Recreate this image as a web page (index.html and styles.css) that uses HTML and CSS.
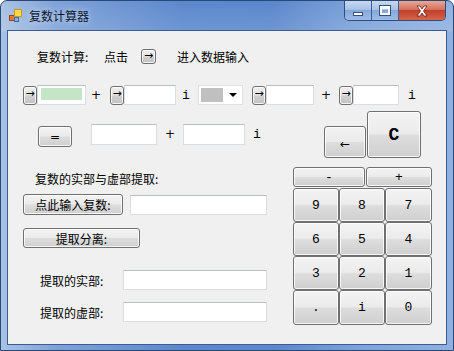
FILE: index.html
```html
<!DOCTYPE html>
<html>
<head>
<meta charset="utf-8">
<link rel="stylesheet" href="styles.css">
</head>
<body>
<div class="window">
  <div class="titlebar">
    <svg class="appicon" width="13" height="13" viewBox="0 0 13 13">
      <rect x="0.5" y="6.5" width="5" height="5" fill="#e8742e" stroke="#a34310"/>
      <rect x="5.5" y="0.5" width="7" height="7" fill="#ffd84a" stroke="#c79a12"/>
      <rect x="5.5" y="8.5" width="4" height="4" fill="#7fb0e8" stroke="#3a6aa8"/>
    </svg>
    <span class="title">复数计算器</span>
    <div class="caption">
      <div class="cbtn min"><span class="minbar"></span></div>
      <div class="cbtn max"><span class="maxbox"></span></div>
      <div class="cbtn close">
        <svg width="14" height="12" viewBox="0 0 14 12">
          <path d="M2 1 L5 1 L7 4 L9 1 L12 1 L8.5 6 L12 11 L9 11 L7 8 L5 11 L2 11 L5.5 6 Z" fill="#fff" stroke="#6b1a10" stroke-width="0.8"/>
        </svg>
      </div>
    </div>
  </div>
  <div class="client">
    <div class="r1">
      <span class="lbl-calc">复数计算:</span>
      <span class="lbl-click">点击</span>
      <span class="btn arrow a1">→</span>
      <span class="lbl-enter">进入数据输入</span>
    </div>
    <div class="r2">
      <span class="btn arrow a2">→</span>
      <span class="tb tb-green"><span class="green"></span></span>
      <span class="sym sym-p1">+</span>
      <span class="btn arrow a3">→</span>
      <span class="tb tb2"></span>
      <span class="sym mono sym-i1">i</span>
      <span class="combo"><span class="combo-sel"></span><span class="combo-arrow"></span></span>
      <span class="btn arrow a4">→</span>
      <span class="tb tb3"></span>
      <span class="sym sym-p2">+</span>
      <span class="btn arrow a5">→</span>
      <span class="tb tb4"></span>
      <span class="sym mono sym-i2">i</span>
    </div>
    <div class="lower">
      <div class="left">
        <div class="r3">
          <span class="btn eq">=</span>
          <span class="tb tb5"></span>
          <span class="sym sym-p3">+</span>
          <span class="tb tb6"></span>
          <span class="sym mono sym-i3">i</span>
        </div>
        <div class="lbl-extract">复数的实部与虚部提取:</div>
        <div class="r4">
          <span class="btn btn-input">点此输入复数:</span>
          <span class="tb tb7"></span>
        </div>
        <div class="r5">
          <span class="btn btn-split">提取分离:</span>
        </div>
        <div class="r6">
          <span class="lbl-part">提取的实部:</span>
          <span class="tb tb8"></span>
        </div>
        <div class="r7">
          <span class="lbl-part">提取的虚部:</span>
          <span class="tb tb8"></span>
        </div>
      </div>
      <div class="right">
        <div class="top-keys">
          <span class="btn back">←</span>
          <span class="btn clear">C</span>
        </div>
        <div class="pm">
          <span class="btn minus mono">-</span>
          <span class="btn plus mono">+</span>
        </div>
        <div class="pad">
          <span class="btn key">9</span>
          <span class="btn key">8</span>
          <span class="btn key">7</span>
          <span class="btn key">6</span>
          <span class="btn key">5</span>
          <span class="btn key">4</span>
          <span class="btn key">3</span>
          <span class="btn key">2</span>
          <span class="btn key">1</span>
          <span class="btn key">.</span>
          <span class="btn key">i</span>
          <span class="btn key">0</span>
        </div>
      </div>
    </div>
  </div>
</div>
</body>
</html>
```

FILE: styles.css
```css
* { box-sizing: border-box; }
html, body { margin: 0; padding: 0; background: #fff; }
body {
  font-family: "Noto Sans CJK SC", sans-serif;
  font-size: 12px;
  color: #000;
}
.window {
  width: 454px;
  height: 351px;
  display: flex;
  flex-direction: column;
  border: 1px solid #2b4775;
  border-radius: 7px 7px 0 0;
  background:
    linear-gradient(to bottom, rgba(255,255,255,0) 0, rgba(255,255,255,0.12) 30px, rgba(0,0,0,0) 31px),
    linear-gradient(to right, #a9c2e4 0%, #7fa2d8 12%, #5b88cc 40%, #5a87cb 60%, #7fa3da 80%, #8fb0e0 100%);
  overflow: hidden;
}
.titlebar {
  height: 29px;
  display: flex;
  align-items: center;
  padding-left: 8px;
}
.appicon { flex: none; margin-top: 0; }
.title {
  margin-left: 7px;
  font-size: 12px;
  color: #0b1730;
  text-shadow: 0 0 6px rgba(255,255,255,0.7);
}
.caption {
  margin-left: auto;
  margin-right: 7px;
  align-self: flex-start;
  margin-top: 0;
  display: flex;
  height: 20px;
  border: 1px solid #2e4c80;
  border-top: none;
  border-radius: 0 0 5px 5px;
  overflow: hidden;
}
.cbtn {
  height: 19px;
  display: flex;
  align-items: center;
  justify-content: center;
}
.min, .max {
  width: 27px;
  background: linear-gradient(to bottom, #c7d8f0 0%, #a7c1e6 45%, #86a8d9 50%, #9dbbe6 100%);
  border-right: 1px solid #3c5d93;
}
.close {
  width: 46px;
  background: linear-gradient(to bottom, #e9a897 0%, #d6705c 45%, #c2402b 50%, #d2664a 100%);
}
.minbar {
  display: block;
  width: 10px;
  height: 4px;
  margin-top: 7px;
  background: #fff;
  border: 1px solid #34507e;
}
.maxbox {
  display: block;
  width: 10px;
  height: 9px;
  background: transparent;
  border: 2px solid #fff;
  border-top-width: 3px;
  outline: 1px solid #34507e;
}
.client {
  margin: 1px 7px 0 7px;
  height: 313px;
  background: #f0f0f0;
  box-shadow: 0 0 0 1px #3b5d93;
}

/* generic controls */
.btn {
  display: inline-flex;
  align-items: center;
  justify-content: center;
  border: 1px solid #707070;
  border-radius: 3px;
  background: linear-gradient(to bottom, #f3f3f3 0%, #ebebeb 48%, #dddddd 52%, #cfcfcf 100%);
  box-shadow: inset 0 0 0 1px rgba(255,255,255,0.8);
  color: #000;
  flex: none;
  white-space: nowrap;
}
.tb {
  display: inline-block;
  flex: none;
  background: #fff;
  border: 1px solid #dadde2;
  border-top-color: #b8bcc4;
}
.sym {
  flex: none;
  width: 10px;
  text-align: center;
  font-family: "DejaVu Sans", sans-serif;
  font-size: 12px;
}
.mono { font-family: "Liberation Mono", monospace; font-size: 13px; }

/* row 1 */
.r1 {
  margin-top: 18px;
  height: 15px;
  display: flex;
  align-items: center;
}
.lbl-calc { margin-left: 29px; width: 67px; flex: none; }
.lbl-click { width: 37px; flex: none; }
.lbl-enter { margin-left: 21px; flex: none; }
.arrow {
  font-family: "DejaVu Sans", sans-serif;
  font-size: 11px;
  line-height: 1;
  border-color: #6f6f6f;
  background: linear-gradient(to bottom, #f0f0f0 0%, #e3e3e3 45%, #cfcfcf 55%, #c2c2c2 100%);
  overflow: hidden;
  padding-bottom: 3px;
}
.a1 { width: 15px; height: 15px; }
.a2, .a3, .a4, .a5 { width: 14px; height: 19px; }

/* row 2 */
.r2 {
  margin-top: 21px;
  height: 20px;
  display: flex;
  align-items: center;
}
.a2 { margin-left: 15px; }
.tb-green { width: 49px; height: 20px; padding: 2px 3px 4px 3px; }
.green { display: block; width: 100%; height: 100%; background: #c5e5c7; }
.sym-p1 { margin-left: 5px; }
.a3 { margin-left: 9px; }
.tb2 { width: 52px; height: 20px; }
.sym-i1 { margin-left: 5px; }
.combo {
  margin-left: 7px;
  width: 45px;
  height: 20px;
  flex: none;
  display: flex;
  align-items: center;
  background: #fff;
  border: 1px solid #e2e2e2;
  padding: 2px;
}
.combo-sel { display: block; width: 22px; height: 14px; background: #c0c0c0; }
.combo-arrow {
  display: block;
  margin-left: 6px;
  width: 0;
  height: 0;
  border-left: 4px solid transparent;
  border-right: 4px solid transparent;
  border-top: 4px solid #000;
}
.a4 { margin-left: 9px; }
.tb3 { width: 48px; height: 20px; }
.sym-p2 { margin-left: 7px; }
.a5 { margin-left: 8px; }
.tb4 { width: 46px; height: 20px; }
.sym-i2 { margin-left: 8px; }

/* lower section */
.lower {
  margin-top: 6px;
  display: flex;
}
.left { width: 285px; flex: none; }
.right { width: 139px; flex: none; }

.r3 {
  margin-top: 13px;
  height: 23px;
  display: flex;
  align-items: flex-start;
}
.eq {
  margin-left: 30px;
  margin-top: 2px;
  width: 34px;
  height: 21px;
  font-family: "DejaVu Sans", sans-serif;
}
.tb5 { margin-left: 19px; width: 66px; height: 21px; }
.sym-p3 { margin-left: 8px; line-height: 21px; }
.tb6 { margin-left: 8px; width: 62px; height: 21px; }
.sym-i3 { margin-left: 7px; line-height: 21px; }

.lbl-extract {
  margin-top: 24px;
  margin-left: 27px;
  line-height: 15px;
  height: 15px;
}
.r4 {
  margin-top: 8px;
  display: flex;
  align-items: flex-start;
}
.btn-input { margin-left: 15px; width: 100px; height: 21px; }
.tb7 { margin-left: 7px; margin-top: 1px; width: 137px; height: 20px; }

.r5 { margin-top: 13px; display: flex; }
.btn-split { margin-left: 15px; width: 117px; height: 20px; }

.r6, .r7 {
  display: flex;
  align-items: center;
  height: 20px;
}
.r6 { margin-top: 22px; }
.r7 { margin-top: 12px; }
.lbl-part { margin-left: 32px; width: 83px; flex: none; }
.tb8 { width: 144px; height: 20px; }

/* keypad */
.top-keys {
  height: 47px;
  display: flex;
  align-items: flex-end;
}
.back {
  margin-left: 31px;
  width: 42px;
  height: 32px;
  font-family: "DejaVu Sans", sans-serif;
  font-size: 12px;
  padding-top: 4px;
}
.clear {
  margin-left: 1px;
  width: 54px;
  height: 47px;
  font-family: "Liberation Mono", monospace;
  font-weight: bold;
  font-size: 18px;
}
.pm {
  margin-top: 9px;
  height: 20px;
  display: flex;
}
.minus { width: 72px; height: 20px; }
.plus { margin-left: 1px; width: 66px; height: 20px; }
.pad {
  margin-top: 1px;
  display: grid;
  grid-template-columns: 46px 46px 47px;
  grid-template-rows: 34px 34px 34px 35px;
}
.key {
  width: 100%;
  height: 100%;
  font-family: "Liberation Mono", monospace;
  font-size: 13px;
}
```
